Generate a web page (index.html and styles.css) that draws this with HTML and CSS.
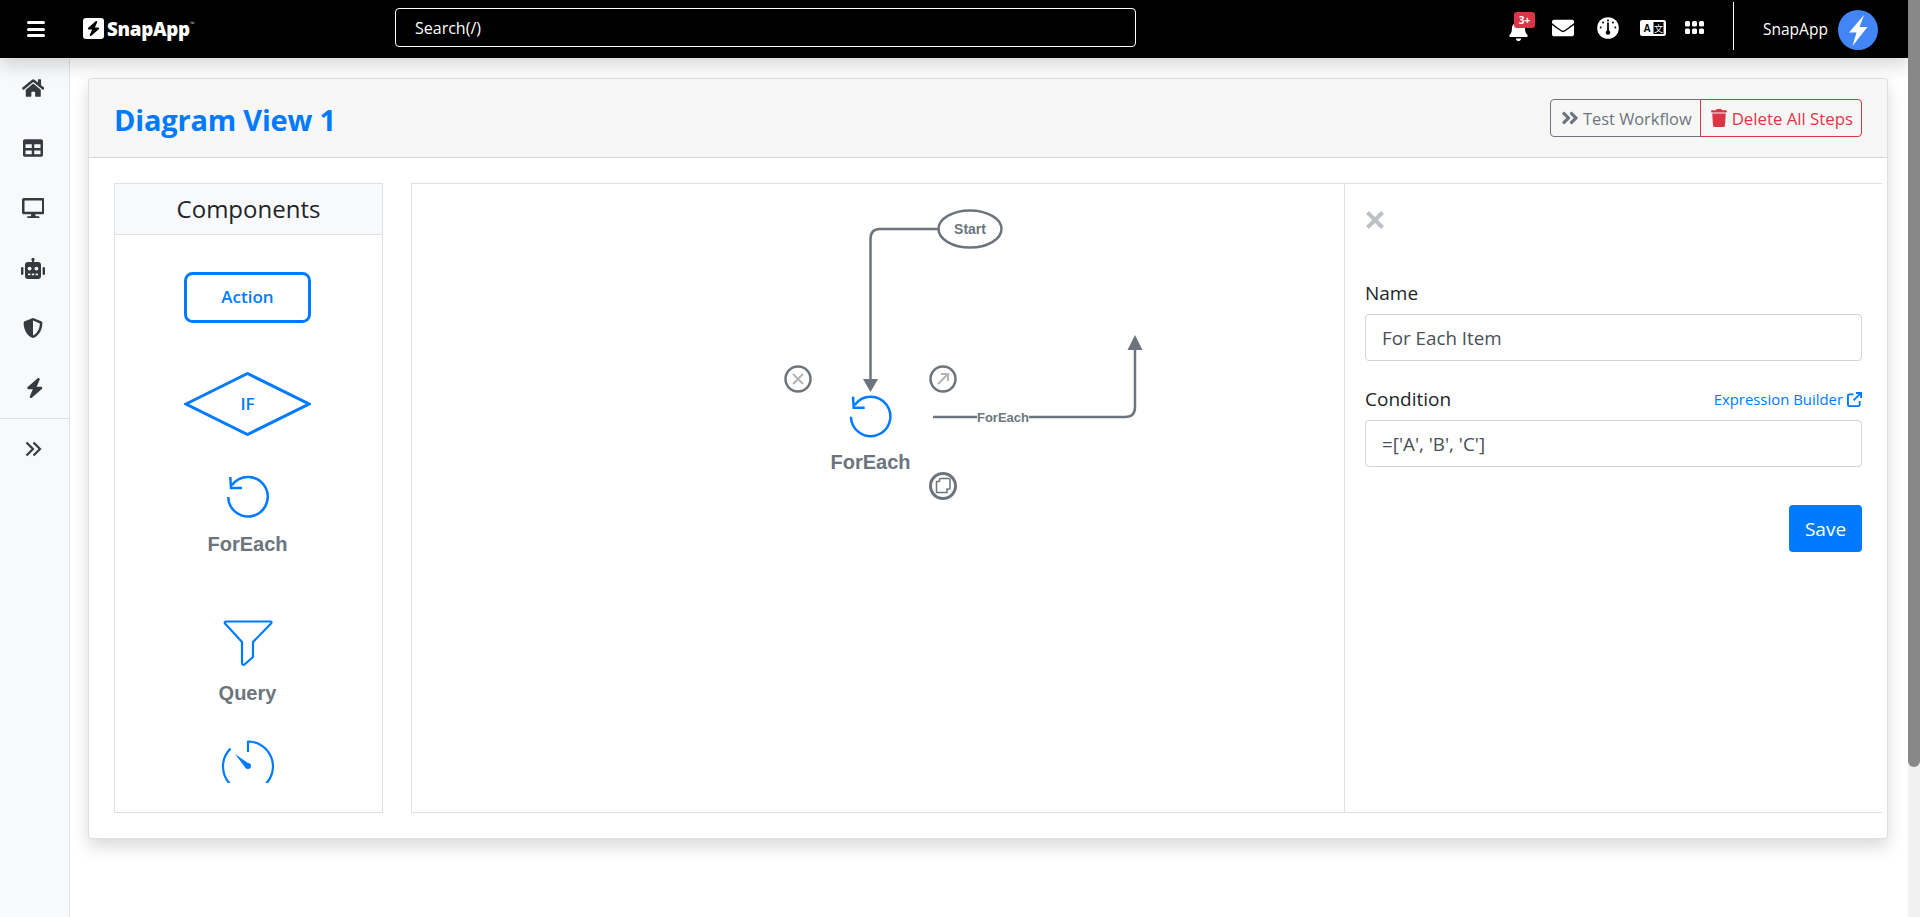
FILE: index.html
```html
<!DOCTYPE html>
<html lang="en">
<head>
<meta charset="utf-8">
<title>Diagram View 1</title>
<link rel="stylesheet" href="styles.css">
</head>
<body>
<div class="scrollbar"><span class="scroll-thumb"></span></div>
<header class="topbar">
  <button class="menu-btn" aria-label="Menu"><span></span><span></span><span></span></button>
  <div class="brand">
    <span class="brand-mark"><svg viewBox="0 0 448 512" class="brand-bolt"><path d="M349.4 44.6c5.9-13.7 1.5-29.7-10.6-38.5s-28.6-8-39.9 1.8l-256 224c-10 8.8-13.6 22.9-8.9 35.3S50.7 288 64 288H175.5L98.6 467.4c-5.9 13.7-1.5 29.7 10.6 38.5s28.6 8 39.9-1.8l256-224c10-8.8 13.6-22.9 8.9-35.3s-16.6-20.7-30-20.7H272.5L349.4 44.6z"/></svg></span>
    <span class="brand-name">SnapApp</span><span class="brand-tm">™</span>
  </div>
  <div class="search">Search(/)</div>
  <nav class="top-icons">
    <span class="bell-wrap">
      <svg class="ic-bell" viewBox="0 0 448 512"><path d="M224 512c35.32 0 63.97-28.65 63.97-64H160.03c0 35.35 28.65 64 63.97 64zm215.39-149.71c-19.32-20.76-55.47-51.99-55.47-154.29 0-77.7-54.48-139.9-127.94-155.16V32c0-17.67-14.32-32-31.98-32s-31.98 14.33-31.98 32v20.84C118.56 68.1 64.08 130.3 64.08 208c0 102.3-36.15 133.53-55.47 154.29-6 6.45-8.66 14.16-8.61 21.71.11 16.4 12.98 32 32.1 32h383.8c19.12 0 32-15.6 32.1-32 .05-7.55-2.61-15.27-8.61-21.71z"/></svg>
      <span class="badge">3+</span>
    </span>
    <svg class="ic-mail" viewBox="0 0 512 512"><path d="M502.3 190.8c3.9-3.1 9.7-.2 9.7 4.7V400c0 26.5-21.5 48-48 48H48c-26.5 0-48-21.5-48-48V195.6c0-5 5.7-7.8 9.7-4.7 22.4 17.4 52.1 39.5 154.1 113.6 21.1 15.4 56.7 47.8 92.2 47.6 35.7.3 72-32.8 92.3-47.6 102-74.1 131.6-96.3 154-113.7zM256 320c23.2.4 56.6-29.2 73.4-41.4 132.7-96.3 142.8-104.7 173.4-128.7 5.8-4.5 9.2-11.5 9.2-18.9v-19c0-26.5-21.5-48-48-48H48C21.5 64 0 85.5 0 112v19c0 7.4 3.4 14.3 9.2 18.9 30.6 23.9 40.7 32.4 173.4 128.7 16.8 12.2 50.2 41.8 73.4 41.4z"/></svg>
    <svg class="ic-gauge" viewBox="0 0 22 22"><circle cx="11" cy="11" r="10.8" fill="#fff"/><rect x="10.1" y="5.5" width="1.8" height="10" fill="#000"/><circle cx="11" cy="15.5" r="2.2" fill="#000"/><circle cx="11" cy="3.4" r="1" fill="#000"/><circle cx="6" cy="5.5" r="1" fill="#000"/><circle cx="16" cy="5.5" r="1" fill="#000"/><circle cx="3.7" cy="10.5" r="1" fill="#000"/><circle cx="18.3" cy="10.5" r="1" fill="#000"/></svg>
    <svg class="ic-lang" viewBox="0 0 26 16"><rect width="26" height="16" rx="2" fill="#fff"/><rect x="13.5" y="2" width="10" height="12" fill="#000"/><text x="7" y="12.2" class="lang-a">A</text><text x="18.5" y="11.8" class="lang-z">文</text></svg>
    <svg class="ic-apps" viewBox="0 0 19 14"><rect width="5" height="5.5" rx="1.5"/><rect x="7" width="5" height="5.5" rx="1.5"/><rect x="14" width="5" height="5.5" rx="1.5"/><rect y="7.5" width="5" height="5.5" rx="1.5"/><rect x="7" y="7.5" width="5" height="5.5" rx="1.5"/><rect x="14" y="7.5" width="5" height="5.5" rx="1.5"/></svg>
  </nav>
  <div class="user">
    <span class="user-name">SnapApp</span>
    <span class="avatar"><svg viewBox="0 0 40 40"><path d="M26 5 L11 22.5 L18.5 22.5 L14.5 36 L29.5 17 L21.5 17 Z" fill="#fff"/></svg></span>
  </div>
</header>

<div class="shell">
  <aside class="sidebar">
    <div class="side-group">
      <a class="side-link"><svg class="side-ic" viewBox="0 0 576 512"><path d="M280.37 148.26L96 300.11V464a16 16 0 0 0 16 16l112.06-.29a16 16 0 0 0 15.92-16V368a16 16 0 0 1 16-16h64a16 16 0 0 1 16 16v95.64a16 16 0 0 0 16 16.05L464 480a16 16 0 0 0 16-16V300L295.67 148.26a12.19 12.19 0 0 0-15.3 0zM571.6 251.47L488 182.56V44.05a12 12 0 0 0-12-12h-56a12 12 0 0 0-12 12v72.61L318.47 43a48 48 0 0 0-61 0L4.34 251.47a12 12 0 0 0-1.6 16.9l25.5 31A12 12 0 0 0 45.15 301l235.22-193.74a12.19 12.19 0 0 1 15.3 0L530.9 301a12 12 0 0 0 16.9-1.6l25.5-31a12 12 0 0 0-1.7-16.93z"/></svg></a>
      <a class="side-link"><svg class="side-ic" viewBox="0 0 512 512"><path d="M464 32H48C21.49 32 0 53.49 0 80v352c0 26.51 21.49 48 48 48h416c26.51 0 48-21.49 48-48V80c0-26.51-21.49-48-48-48zM224 416H64v-96h160v96zm0-160H64v-96h160v96zm224 160H288v-96h160v96zm0-160H288v-96h160v96z"/></svg></a>
      <a class="side-link"><svg class="side-ic" viewBox="0 0 576 512"><path d="M528 0H48C21.5 0 0 21.5 0 48v320c0 26.5 21.5 48 48 48h192l-16 48h-72c-13.3 0-24 10.7-24 24s10.7 24 24 24h272c13.3 0 24-10.7 24-24s-10.7-24-24-24h-72l-16-48h192c26.5 0 48-21.5 48-48V48c0-26.5-21.5-48-48-48zm-16 352H64V64h448v288z"/></svg></a>
      <a class="side-link"><svg class="side-ic side-robot" viewBox="0 0 26 21"><rect x="5" y="4" width="16" height="17" rx="3"/><rect x="12" y="0" width="2" height="5"/><circle cx="13" cy="1.4" r="1.6"/><rect x="1" y="9" width="2.4" height="8" rx="1.2"/><rect x="22.6" y="9" width="2.4" height="8" rx="1.2"/><circle cx="9.6" cy="10.6" r="1.9" fill="#f8f9fa"/><circle cx="16.4" cy="10.6" r="1.9" fill="#f8f9fa"/><rect x="8" y="15.6" width="2.4" height="1.6" fill="#f8f9fa"/><rect x="11.8" y="15.6" width="2.4" height="1.6" fill="#f8f9fa"/><rect x="15.6" y="15.6" width="2.4" height="1.6" fill="#f8f9fa"/></svg></a>
      <a class="side-link"><svg class="side-ic" viewBox="0 0 512 512"><path d="M466.5 83.7l-192-80a48.15 48.15 0 0 0-36.9 0l-192 80C27.7 91.1 16 108.6 16 128c0 198.5 114.5 335.7 221.5 380.3 11.8 4.9 25.1 4.9 36.9 0C360.1 472.6 496 349.3 496 128c0-19.4-11.7-36.9-29.5-44.3zM256.1 446.3l-.1-381 175.9 73.3c-3.3 151.4-82.1 261.1-175.8 307.7z"/></svg></a>
      <a class="side-link"><svg class="side-ic side-bolt" viewBox="0 0 448 512"><path d="M349.4 44.6c5.9-13.7 1.5-29.7-10.6-38.5s-28.6-8-39.9 1.8l-256 224c-10 8.8-13.6 22.9-8.9 35.3S50.7 288 64 288H175.5L98.6 467.4c-5.9 13.7-1.5 29.7 10.6 38.5s28.6 8 39.9-1.8l256-224c10-8.8 13.6-22.9 8.9-35.3s-16.6-20.7-30-20.7H272.5L349.4 44.6z"/></svg></a>
    </div>
    <a class="side-link side-toggle"><svg class="side-chev" viewBox="0 0 17 16" width="17" height="16"><path d="M1.500 1.500 L8 8 L1.500 14.500 M8.500 1.500 L15 8 L8.500 14.500"/></svg></a>
  </aside>

  <main class="content">
    <section class="card">
      <div class="card-head">
        <h1 class="title">Diagram View 1</h1>
        <div class="btn-group">
          <button class="btn btn-test"><svg class="btn-ic btn-ic-chev" viewBox="0 0 448 512"><path d="M224.3 273l-136 136c-9.4 9.4-24.6 9.4-33.9 0l-22.6-22.6c-9.4-9.4-9.4-24.6 0-33.9l96.4-96.4-96.4-96.4c-9.4-9.4-9.4-24.6 0-33.9L54.3 103c9.4-9.4 24.6-9.4 33.9 0l136 136c9.5 9.4 9.5 24.6.1 34zm192-34l-136-136c-9.4-9.4-24.6-9.4-33.9 0l-22.6 22.6c-9.4 9.4-9.4 24.6 0 33.9l96.4 96.4-96.4 96.4c-9.4 9.4-9.4 24.6 0 33.9l22.6 22.6c9.4 9.4 24.6 9.4 33.9 0l136-136c9.4-9.2 9.4-24.4 0-33.8z"/></svg>Test Workflow</button>
          <button class="btn btn-del"><svg class="btn-ic" viewBox="0 0 448 512"><path d="M432 32H312l-9.4-18.7A24 24 0 0 0 281.1 0H166.8a23.72 23.72 0 0 0-21.4 13.3L136 32H16A16 16 0 0 0 0 48v32a16 16 0 0 0 16 16h416a16 16 0 0 0 16-16V48a16 16 0 0 0-16-16zM53.2 467a48 48 0 0 0 47.9 45h245.8a48 48 0 0 0 47.9-45L416 128H32z"/></svg>Delete All Steps</button>
        </div>
      </div>
      <div class="card-body">
        <div class="palette">
          <div class="palette-head">Components</div>
          <div class="palette-list">
            <svg class="pal-item pal-action" width="127" height="51" viewBox="0 0 127 51"><rect x="1.5" y="1.5" width="124" height="48" rx="7" class="shape"/><text x="63.5" y="31" class="shape-text">Action</text></svg>
            <svg class="pal-item pal-if" width="127" height="64" viewBox="0 0 127 64"><path d="M2 32 L63.500 1.500 L125 32 L63.500 62.500 Z" class="shape"/><text x="63.500" y="38" class="shape-text">IF</text></svg>
            <div class="pal-item pal-foreach">
              <svg width="44" height="44" viewBox="0 0 44 44"><path d="M6 10.300 A19.700 19.700 0 1 1 2.300 22" class="shape loop"/><path d="M4.300 2 L5 13 L16 13" class="shape loop"/></svg>
              <span class="pal-label">ForEach</span>
            </div>
            <div class="pal-item pal-query">
              <svg width="50" height="48" viewBox="0 0 50 48"><path d="M3.500 2.500 H47 Q49.500 2.500 48 4.500 L30 23 V38 L21.500 45.500 Q19 46.500 19 44 V23 L2 4.500 Q1 2.500 3.500 2.500 Z" class="shape thin"/></svg>
              <span class="pal-label">Query</span>
            </div>
            <svg class="pal-item pal-delay" width="56" height="43" viewBox="0 0 56 43"><path d="M28 12 V1.500 A25 25 0 0 1 43.600 46 M12.400 46 A25 25 0 0 1 10.500 8.600" class="shape thin"/><path d="M15 14 L30 24.500 L26 28.500 Z" fill="#007bff"/><circle cx="28" cy="26" r="3" fill="#007bff"/></svg>
          </div>
        </div>
        <div class="workspace">
          <div class="diagram">
            <svg class="diagram-svg" width="932" height="628" viewBox="1 1 932 628">
              <g class="edge">
                <path d="M528 46 H469 Q459.500 46 459.500 56 V196"/>
                <path d="M522 234 H714 Q724 234 724 224 V165"/>
              </g>
              <path d="M452 196 H467 L459.500 209 Z" class="arrow"/>
              <path d="M716.500 167 H731.500 L724 152 Z" class="arrow"/>
              <ellipse cx="559" cy="46" rx="31.500" ry="18.500" class="node-start"/>
              <text x="559" y="51" class="t-start">Start</text>
              <path d="M443.700 222 A19.700 19.700 0 1 1 440 233.700" class="shape loop"/>
              <path d="M442 213.700 L442.700 224.700 L453.700 224.700" class="shape loop"/>
              <text x="459.500" y="286" class="t-node">ForEach</text>
              <rect x="566" y="226" width="52" height="16" fill="#fff" class="edge-bg"/>
              <text x="592" y="239" class="t-edge">ForEach</text>
              <circle cx="387" cy="196" r="12.500" class="tool"/>
              <path d="M382 191 L392 201 M392 191 L382 201" class="tool-mark"/>
              <circle cx="532" cy="196" r="12.500" class="tool"/>
              <path d="M527 201 L537 191 M530 191 H537 V198" class="tool-mark"/>
              <circle cx="532" cy="303" r="12.500" class="tool tool-thick"/>
              <rect x="528.500" y="295.500" width="10.500" height="10.500" rx="1" class="tool-copy"/>
              <path d="M528.500 298.500 H525.500 V309.500 H536 V306" class="tool-copy"/>
            </svg>
          </div>
          <form class="props">
            <div class="close-x"><svg viewBox="0 0 20 20" width="20" height="20"><path d="M2.500 2.500 L17.500 17.500 M17.500 2.500 L2.500 17.500"/></svg></div>
            <div class="field">
              <div class="field-label"><span>Name</span></div>
              <div class="input">For Each Item</div>
            </div>
            <div class="field">
              <div class="field-label"><span>Condition</span>
                <a class="expr">Expression Builder <svg viewBox="0 0 16 16" width="15" height="15"><path d="M7 2.500 H2.500 Q1 2.500 1 4 V13.500 Q1 15 2.500 15 H12 Q13.500 15 13.500 13.500 V9.500 M9.500 1 H15 V6.500 M15 1 L7 9" /></svg></a>
              </div>
              <div class="input">=['A', 'B', 'C']</div>
            </div>
            <div class="actions"><button type="button" class="save">Save</button></div>
          </form>
        </div>
      </div>
    </section>
  </main>
</div>
</body>
</html>
```
FILE: styles.css
```css
* { box-sizing: border-box; }
body {
  margin: 0;
  padding-right: 12px;
  min-height: 917px;
  background: #fff;
  font-family: "Open Sans", "Noto Sans", sans-serif;
  font-size: 16px;
  color: #212529;
}
button { font-family: inherit; cursor: pointer; }

.scrollbar {
  position: fixed;
  top: 0;
  right: 0;
  bottom: 0;
  width: 12px;
  background: #f1f1f1;
  z-index: 20;
}
.scroll-thumb { display: block; height: 767px; background: #888; border-radius: 0 0 6px 6px; }

.topbar {
  position: sticky;
  top: 0;
  z-index: 10;
  height: 58px;
  background: #000;
  color: #fff;
  display: flex;
  align-items: center;
  box-shadow: 0 8px 16px rgba(0,0,0,.15);
}
.menu-btn {
  margin-left: 27px;
  width: 18px;
  height: 16px;
  padding: 0;
  border: 0;
  background: none;
  display: flex;
  flex-direction: column;
  justify-content: space-between;
}
.menu-btn span { height: 3px; width: 18px; background: #fff; border-radius: 1.5px; }

.brand { display: flex; align-items: center; margin-left: 38px; width: 312px; margin-top: -1px; }
.brand-mark {
  width: 21px; height: 21px; background: #fff; border-radius: 3px;
  display: flex; align-items: center; justify-content: center;
}
.brand-bolt { height: 15px; width: 13px; fill: #000; }
.brand-name { margin-left: 3px; font-weight: 800; font-size: 18.800px; letter-spacing: -.3px; }
.brand-tm { font-size: 6px; align-self: flex-start; margin-top: 4px; color: #bbb; }

.search {
  width: 741px;
  height: 39px;
  border: 1px solid #fff;
  border-radius: 4px;
  padding-left: 19px;
  display: flex;
  align-items: center;
  font-size: 16px;
  margin-top: -3px;
}

.top-icons { display: flex; align-items: center; margin-left: 373px; margin-top: -3px; }
.bell-wrap { position: relative; display: block; width: 21px; height: 20px; margin-top: 4px; }
.ic-bell { display: block; width: 19px; height: 21px; fill: #fff; }
.badge {
  position: absolute;
  left: 5px;
  top: -8px;
  width: 21px;
  height: 16px;
  border-radius: 3px;
  background: #dc3545;
  color: #fff;
  font-size: 10px;
  font-weight: 700;
  line-height: 16px;
  text-align: center;
}
.ic-mail { width: 22px; height: 22px; fill: #fff; margin-left: 22px; }
.ic-gauge { width: 22px; height: 22px; margin-left: 23px; }
.ic-lang { width: 26px; height: 16px; margin-left: 21px; }
.lang-a { font-family: "Liberation Sans", sans-serif; font-size: 10px; font-weight: 700; text-anchor: middle; fill: #000; }
.lang-z { font-family: "Noto Sans CJK SC", sans-serif; font-size: 9px; text-anchor: middle; fill: #fff; }
.ic-apps { width: 19px; height: 14px; fill: #fff; margin-left: 19px; }

.user {
  margin-left: 29px;
  height: 48px;
  margin-top: -7px;
  border-left: 1px solid #fff;
  padding-left: 29px;
  display: flex;
  align-items: center;
}
.user-name { font-size: 15.500px; width: 65px; white-space: nowrap; margin-top: 6px; }
.avatar { width: 40px; height: 40px; border-radius: 50%; background: #4285f4; margin-left: 10px; margin-top: 8px; display: block; }
.avatar svg { display: block; }

.shell { display: flex; align-items: stretch; min-height: 859px; }
.sidebar {
  width: 70px;
  flex: none;
  background: #f8f9fa;
  border-right: 1px solid #dee2e6;
}
.side-group { border-bottom: 1px solid #dee2e6; }
.side-link { display: flex; height: 60px; align-items: center; justify-content: center; padding-right: 3px; }
.side-ic { height: 20px; width: auto; fill: #343a40; }
.side-robot { height: 21px; }
.side-bolt { margin-left: 4px; }
.side-chev { fill: none; stroke: #343a40; stroke-width: 2.200; }

.content { flex: 1; padding: 20px 20px 0 18px; }
.card {
  border: 1px solid rgba(0,0,0,.125);
  border-radius: 4px;
  box-shadow: 0 8px 16px rgba(0,0,0,.15);
  background: #fff;
}
.card-head {
  height: 79px;
  background: #f7f7f7;
  border-bottom: 1px solid rgba(0,0,0,.125);
  border-radius: 4px 4px 0 0;
  display: flex;
  align-items: center;
  justify-content: space-between;
  padding: 0 25px;
}
.title { margin: 2px 0 0; font-size: 29px; font-weight: 700; color: #007bff; letter-spacing: -.2px; }
.btn-group { display: flex; }
.btn {
  height: 38px;
  background: transparent;
  border: 1px solid;
  font-size: 16.400px;
  padding: 0 8px 0 10px;
  display: flex;
  align-items: center;
  white-space: nowrap;
}
.btn-ic { width: 16px; height: 18px; margin-right: 5px; fill: currentColor; flex: none; }
.btn-ic-chev { width: 18px; height: 20px; margin-right: 4px; }
.btn-test { color: #6c757d; border-color: #6c757d; border-radius: 4px 0 0 4px; }
.btn-del { color: #dc3545; border-color: #dc3545; border-radius: 0 4px 4px 0; margin-left: -1px; font-size: 16.800px; }

.card-body { display: flex; padding: 25px 5px 25px 25px; }
.palette { width: 269px; height: 630px; border: 1px solid #dee2e6; flex: none; display: flex; flex-direction: column; }
.palette-head {
  height: 51px;
  flex: none;
  background: #f8f9fa;
  border-bottom: 1px solid #dee2e6;
  font-size: 24px;
  font-weight: 500;
  text-align: center;
  line-height: 50px;
}
.palette-list {
  height: 570px;
  overflow: hidden;
  display: flex;
  flex-direction: column;
  align-items: center;
  padding: 37px 2px 0 0;
}
.pal-item { display: block; flex: none; }
.pal-if { margin-top: 49px; }
.pal-foreach { margin-top: 39px; }
.pal-query { margin-top: 63px; }
.pal-delay { margin-top: 35px; }
.pal-foreach, .pal-query { display: flex; flex-direction: column; align-items: center; }
.pal-foreach svg, .pal-query svg { display: block; }
.pal-label { font-family: "Liberation Sans", sans-serif; font-weight: 700; font-size: 20px; color: #6c757d; margin-top: 14px; line-height: 23px; }
.pal-query .pal-label { margin-top: 15px; }
.shape { fill: none; stroke: #007bff; stroke-width: 3; }
.shape.loop { stroke-width: 2.500; }
.shape.thin { stroke-width: 2.200; stroke-linejoin: round; }
.shape-text { font-family: "Open Sans", sans-serif; font-weight: 600; font-size: 17px; fill: #007bff; text-anchor: middle; }

.workspace { flex: 1; height: 630px; margin-left: 28px; display: flex; border: 1px solid #dee2e6; border-right: 0; }
.diagram { width: 933px; flex: none; border-right: 1px solid #dee2e6; }
.diagram-svg { display: block; }
.edge path { fill: none; stroke: #6c757d; stroke-width: 2.500; }
.arrow { fill: #6c757d; }
.node-start { fill: #fff; stroke: #6c757d; stroke-width: 2.500; }
.t-start, .t-node, .t-edge { font-family: "Liberation Sans", sans-serif; font-weight: 700; fill: #6c757d; text-anchor: middle; }
.t-start { font-size: 14px; }
.t-node { font-size: 20px; }
.t-edge { font-size: 13px; }
.tool { fill: #fff; stroke: #6c757d; stroke-width: 2.500; }
.tool-thick { stroke-width: 3; }
.tool-mark { fill: none; stroke: #b5b5b5; stroke-width: 2; }
.tool-copy { fill: #fff; stroke: #6c757d; stroke-width: 1.500; }

.props { flex: 1; padding: 26px 20px 0 20px; }
.close-x { height: 20px; margin-bottom: 50px; }
.close-x svg { display: block; }
.close-x path { stroke: #bdc1c5; stroke-width: 4; fill: none; }
.field { margin-bottom: 25px; }
.field-label { display: flex; justify-content: space-between; align-items: center; margin-bottom: 8px; line-height: 26px; font-size: 19px; }
.expr { color: #007bff; font-size: 14.900px; display: flex; align-items: center; gap: 4px; }
.expr svg { fill: none; stroke: #007bff; stroke-width: 2; }
.input {
  height: 47px;
  border: 1px solid #ced4da;
  border-radius: 4px;
  padding: 1px 16px 0;
  display: flex;
  align-items: center;
  font-size: 18.800px;
  color: #495057;
}
.actions { display: flex; justify-content: flex-end; margin-top: 38px; }
.save {
  width: 73px;
  height: 47px;
  border: 0;
  border-radius: 4px;
  background: #007bff;
  color: #fff;
  font-size: 19px;
}
```
